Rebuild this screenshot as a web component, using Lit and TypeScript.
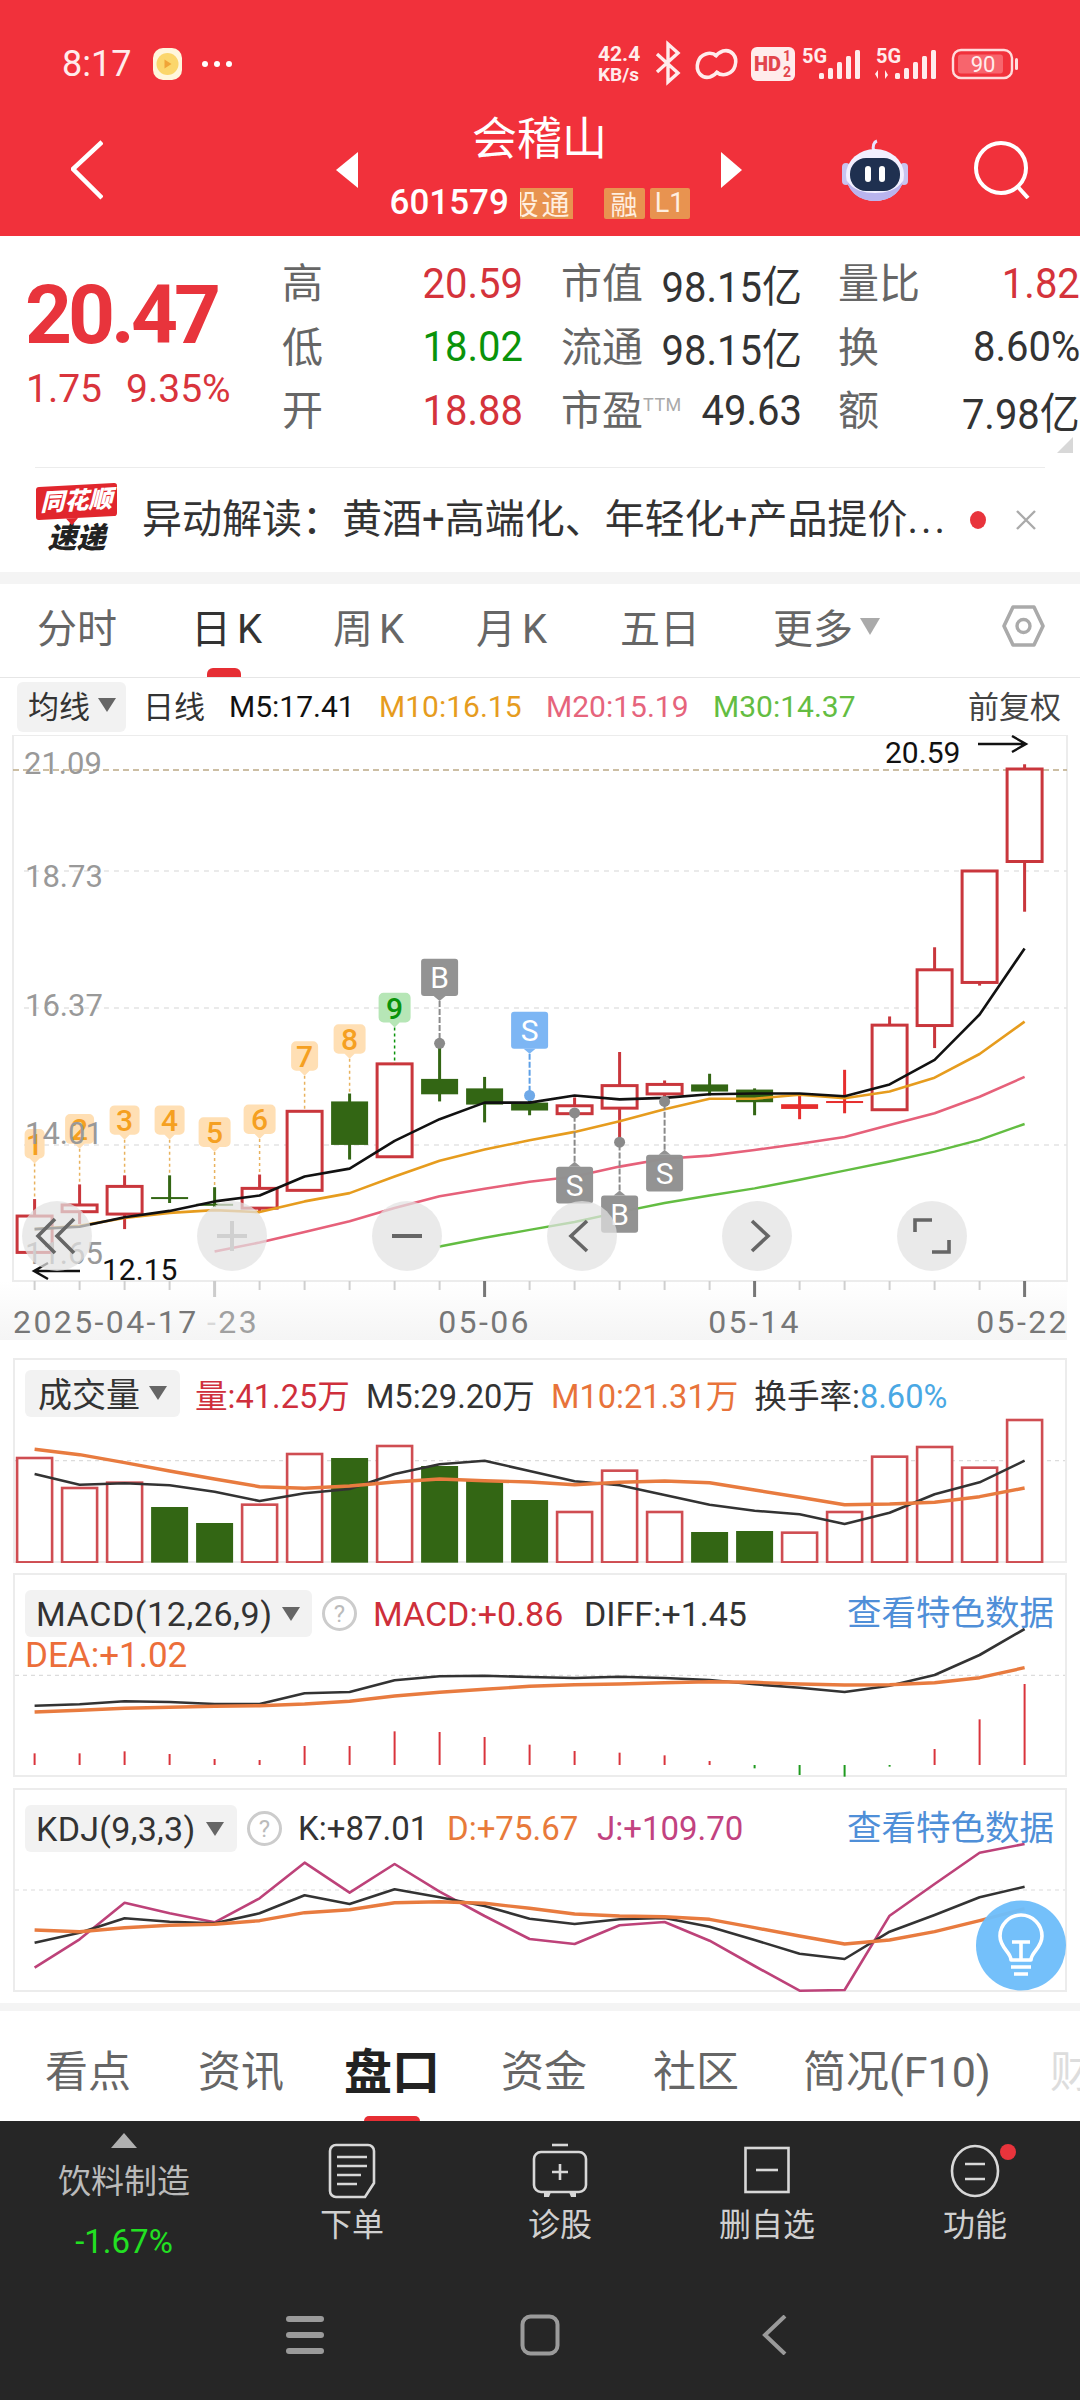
import { LitElement, html, css, svg } from "lit";
import { customElement } from "lit/decorators.js";

/* Horizontal position of the nth trading day on every chart of the page. */
const dayX = (i: number) => 34.6 + 45 * i;
/* Price panel values are stored in panel units; these convert them to page pixels. */
const py = (v: number) => 720 + v / 2.53;
const volY = (v: number) => 1340 + v / 3;
const macdY = (v: number) => 1570 + v / 3;
const kdjY = (v: number) => 1780 + v / 3;

type Candle = [top: number, bottom: number, high: number, low: number, kind: "up" | "down" | "flat"];

const candles: Candle[] = [
  [1255, 1347, 1212, 1347, "up"],
  [1227, 1244, 1175, 1275, "up"],
  [1180, 1250, 1152, 1288, "up"],
  [1207, 1210, 1152, 1222, "down"],
  [1224, 1227, 1182, 1232, "down"],
  [1185, 1235, 1150, 1245, "up"],
  [990, 1190, 990, 1190, "up"],
  [965, 1075, 945, 1112, "down"],
  [870, 1105, 870, 1105, "up"],
  [908, 947, 818, 965, "down"],
  [932, 973, 903, 1018, "down"],
  [968, 988, 950, 1000, "down"],
  [976, 996, 955, 1000, "up"],
  [925, 982, 840, 1068, "up"],
  [922, 946, 912, 965, "up"],
  [922, 940, 895, 950, "down"],
  [935, 967, 932, 1000, "down"],
  [972, 984, 950, 1010, "flat"],
  [964, 967, 885, 995, "flat"],
  [772, 986, 750, 986, "up"],
  [632, 773, 575, 830, "up"],
  [382, 664, 382, 672, "up"],
  [124, 358, 112, 485, "up"],
];

const ma5 = [1288, 1282, 1258, 1242, 1218, 1203, 1155, 1135, 1065, 1010, 968, 968, 950, 960, 956, 947, 945, 945, 952, 922, 860, 745, 578];
const ma10 = [1288, 1280, 1260, 1247, 1240, 1245, 1218, 1197, 1155, 1115, 1087, 1063, 1042, 1015, 985, 958, 958, 948, 957, 940, 905, 845, 763];
const ma20: [number, number][] = [[4, 1345], [5, 1322], [6, 1295], [7, 1268], [8, 1235], [9, 1205], [10, 1186], [11, 1168], [12, 1155], [13, 1130], [14, 1110], [15, 1102], [16, 1088], [17, 1072], [18, 1055], [19, 1025], [20, 995], [21, 953], [22, 903]];
const ma30: [number, number][] = [[9, 1332], [10, 1310], [11, 1290], [12, 1270], [13, 1245], [14, 1222], [15, 1203], [16, 1185], [17, 1163], [18, 1140], [19, 1117], [20, 1092], [21, 1062], [22, 1022]];

const volumes: [number, "r" | "g"][] = [
  [354, "r"], [444, "r"], [428, "r"], [501, "g"], [549, "g"], [494, "r"], [342, "r"], [354, "g"],
  [318, "r"], [378, "g"], [423, "g"], [480, "g"], [516, "r"], [392, "r"], [516, "r"], [576, "g"],
  [573, "g"], [578, "r"], [516, "r"], [350, "r"], [321, "r"], [383, "r"], [240, "r"],
];
const volA = [402, 434, 430, 436, 455, 483, 460, 447, 402, 373, 362, 393, 424, 436, 465, 494, 512, 523, 552, 518, 463, 427, 362];
const volB = [328, 344, 368, 393, 417, 440, 445, 438, 426, 417, 422, 426, 434, 427, 423, 428, 450, 472, 494, 492, 487, 470, 444];

const diff = [407, 403, 394, 396, 402, 402, 370, 366, 331, 319, 317, 321, 324, 320, 324, 330, 343, 353, 366, 347, 315, 255, 177];
const dea = [426, 421, 415, 412, 409, 407, 402, 394, 378, 367, 358, 349, 344, 342, 338, 335, 337, 342, 345, 344, 338, 323, 293];
const macdBars = [550, 550, 544, 552, 567, 570, 528, 528, 484, 486, 501, 524, 543, 548, 556, 573, 595, 615, 620, 590, 537, 448, 342];

const kLine = [488, 458, 415, 425, 430, 400, 346, 372, 328, 352, 378, 416, 432, 418, 414, 440, 480, 521, 537, 455, 405, 352, 320];
const dLine = [450, 455, 443, 436, 433, 422, 398, 389, 368, 365, 370, 385, 402, 408, 410, 418, 443, 468, 492, 480, 455, 422, 386];
const jLine = [563, 478, 368, 400, 427, 355, 248, 338, 252, 335, 408, 477, 492, 436, 426, 482, 558, 632, 630, 407, 312, 218, 192];

/* Numbered sequence flags above the candles: day, label, top and bottom of the flag, flag width. */
const seqFlags: [number, string, number, number, number, boolean][] = [
  [0, "1", 1035, 1122, 20, false],
  [1, "2", 997, 1085, 29, false],
  [2, "3", 975, 1062, 30, false],
  [3, "4", 975, 1062, 30, false],
  [4, "5", 1005, 1093, 32, false],
  [5, "6", 973, 1060, 32, false],
  [6, "7", 813, 900, 27, false],
  [7, "8", 770, 857, 32, false],
  [8, "9", 690, 778, 32, true],
];

/* Trade markers: day, label, flag top, flag bottom, dot position, blue or grey. */
const markers: [number, string, number, number, number, boolean][] = [
  [9, "B", 604, 698, 818, false],
  [11, "S", 738, 832, 950, true],
  [12, "S", 1130, 1223, 994, false],
  [13, "B", 1203, 1297, 1068, false],
  [14, "S", 1100, 1193, 965, false],
];

const line = (vals: number[], map: (v: number) => number, cls: string) =>
  svg`<polyline class=${cls} points=${vals.map((v, i) => `${dayX(i)},${map(v).toFixed(1)}`).join(" ")}></polyline>`;

const lineFrom = (vals: [number, number][], cls: string) =>
  svg`<polyline class=${cls} points=${vals.map(([i, v]) => `${dayX(i)},${py(v).toFixed(1)}`).join(" ")}></polyline>`;

@customElement("app-root")
export class AppRoot extends LitElement {
  static styles = css`
    :host {
      display: block;
      width: 1080px;
      height: 2400px;
      overflow: hidden;
      background: #fff;
      font-family: Roboto, "Noto Sans CJK SC", sans-serif;
      color: #333;
    }
    .app { position: relative; width: 1080px; height: 2400px; overflow: hidden; }
    svg { display: block; }
    text { font-family: Roboto, "Noto Sans CJK SC", sans-serif; }

    /* top red area */
    .hdr { height: 236px; background: #f1313b; color: #fff; }
    .status { display: flex; align-items: center; height: 48px; padding: 40px 0 0 62px; }
    .clock { font-size: 36px; line-height: 48px; width: 67px; color: #ffecec; white-space: nowrap; }
    .mini { margin-left: 24px; }
    .dots { margin-left: 19px; }
    .sys { margin-left: auto; margin-right: 50px; }
    .nav { display: flex; align-items: center; height: 116px; margin-top: 24px; padding-left: 71px; }
    .centre { width: 363px; align-self: flex-start; text-align: center; }
    .tri-l { margin-left: 233px; }
    .tri-r { margin-right: 100px; }
    .search { margin-left: 66px; }
    .name { font-size: 45px; line-height: 56px; color: #fff; }
    .code-row { display: flex; justify-content: center; align-items: center; margin-top: 18px; height: 34px; }
    .code { font-size: 35px; font-weight: 500; line-height: 34px; color: #fff; width: 117px; white-space: nowrap; }
    .tag { display: flex; justify-content: flex-end; align-items: center; height: 31px; background: #e89350; color: #ffefe0; font-size: 28px; border-radius: 2px; overflow: hidden; white-space: nowrap; }
    .tag.cut { width: 53px; margin-left: 13px; margin-right: 31px; letter-spacing: 3px; border-radius: 0; }
    .tag.rong { width: 41px; justify-content: center; margin-right: 5px; font-size: 27px; }
    .tag.lvl { width: 40px; justify-content: center; font-size: 27px; }

    /* quote summary */
    .quote { display: flex; height: 231px; }
    .now { width: 282px; padding: 38px 0 0 25px; box-sizing: border-box; color: #e8343c; }
    .big { font-size: 82px; line-height: 82px; font-weight: 700; letter-spacing: -4px; white-space: nowrap; }
    .chg { display: flex; gap: 24px; margin: 11px 0 0 1px; font-size: 39px; line-height: 44px; color: #d9343c; white-space: nowrap; }
    .stats { display: grid; grid-template-columns: 241px 279px 278px; grid-auto-rows: 63.5px; padding-top: 15px; }
    .cell { display: flex; justify-content: space-between; align-items: center; color: #333; white-space: nowrap; }
    .cell.pl40 { padding-left: 38px; }
    .cell.pl38 { padding-left: 36px; }
    .val { display: inline-block; font-size: 43px; transform: scaleX(0.93); transform-origin: right center; }
    .lbl { font-size: 41px; color: #666; margin-bottom: 5px; }
    .ttm { font-size: 18px; color: #aaa; vertical-align: 14px; letter-spacing: 0.5px; }
    .red { color: #d4333b; }
    .grn { color: #0a930a; }
    .flip { position: absolute; left: 1057px; top: 437px; }

    /* news strip */
    .rule { height: 1px; margin: 0 35px; background: #ececec; }
    .news { display: flex; align-items: center; height: 104px; padding-left: 36px; }
    .logo { width: 81px; flex: none; text-align: center; }
    .logo-top { position: relative; height: 33px; line-height: 33px; background: #e1262d; color: #fff; font-size: 24px; font-weight: 900; font-style: italic; border-radius: 3px; transform: skewY(-3deg); white-space: nowrap; }
    .logo-top::after { content: ""; position: absolute; left: 30px; top: 33px; border-left: 6px solid transparent; border-right: 6px solid transparent; border-top: 7px solid #e1262d; }
    .logo-bot { font-size: 29px; line-height: 33px; margin-top: 4px; font-weight: 900; font-style: italic; color: #222; white-space: nowrap; }
    .headline { width: 805px; margin-left: 25px; font-size: 40px; line-height: 50px; color: #333; white-space: nowrap; overflow: hidden; }
    .ell { letter-spacing: 3px; }
    .pulse { width: 16px; height: 18px; margin-left: 23px; flex: none; border-radius: 50%; background: #e8343c; }
    .close { margin-left: 29px; }
    .band { height: 12px; background: #f4f4f4; }

    /* period tabs */
    .periods { display: grid; grid-template-columns: 154px 142px 143px 144px 153px 229px 43px; align-items: center; height: 84px; padding-left: 37px; font-size: 40px; color: #666; }
    .periods > div { white-space: nowrap; }
    .periods .on { color: #333; }
    .k { margin-left: 6px; }
    .more { display: flex; align-items: center; gap: 7px; }
    .ptr-row { height: 9px; border-bottom: 1px solid #e6e6e6; padding-left: 207px; }
    .ptr { width: 34px; height: 9px; background: #e62e34; border-radius: 6px 6px 0 0; }
    .carets { flex: none; width: 0; height: 0; border-left: 9px solid transparent; border-right: 9px solid transparent; border-top: 14px solid #666; }
    .carets.pale { border-top-color: #aaa; border-left-width: 10px; border-right-width: 10px; border-top-width: 17px; }

    .ma { display: flex; align-items: center; height: 57px; padding-left: 17px; font-size: 30px; white-space: nowrap; }
    .chip { display: flex; align-items: center; box-sizing: border-box; background: #f2f2f2; border-radius: 6px; }
    .chip .carets { margin-left: auto; }
    .ma .chip { width: 109px; height: 50px; padding: 0 10px 4px 11px; font-size: 31px; color: #333; }
    .ma .d { margin: 0 0 4px 17px; color: #333; width: 62px; font-size: 31px; }
    .ma .m5 { margin-left: 24px; width: 124px; color: #111; }
    .ma .m10 { margin-left: 26px; width: 142px; color: #e69c1e; }
    .ma .m20 { margin-left: 25px; width: 143px; color: #e6647c; }
    .ma .m30 { margin-left: 24px; width: 142px; color: #63bd42; }
    .ma .fq { margin: 0 0 4px auto; padding-right: 19px; font-size: 31px; color: #444; }

    /* price chart */
    .price { position: relative; width: 1080px; height: 623px; }
    .pads { position: absolute; left: 22px; top: 466px; display: flex; gap: 105px; }
    .pad { width: 70px; height: 70px; border-radius: 50%; background: rgba(226, 226, 226, 0.72); }
    .pad svg { width: 70px; height: 70px; }

    .frame { fill: none; stroke: #ececec; stroke-width: 2; }
    .grid { stroke: #e4e4e4; stroke-width: 1.4; stroke-dasharray: 5 5; }
    .top-limit { stroke: #bca985; stroke-width: 1.6; stroke-dasharray: 6 4; }
    .tick { stroke: #cfcfcf; stroke-width: 2; }
    .tick.major { stroke: #777; stroke-width: 3; }
    .tick.major.dim { stroke: #ccc; }
    .axis { font-size: 31px; fill: #999; }
    .date { font-size: 32px; fill: #777; letter-spacing: 2.4px; }
    .date-dim { fill: #a0a0a0; }
    .extreme { font-size: 30px; fill: #111; }
    .arrow { fill: none; stroke: #111; stroke-width: 2.4; }

    .up { fill: #fff; stroke: #c9363c; stroke-width: 3; }
    .up-wick { stroke: #c9363c; stroke-width: 3; }
    .down { fill: #336614; }
    .down-wick { stroke: #336614; stroke-width: 3; }
    .flat { fill: #e62e2e; }
    .flat-wick { stroke: #e62e2e; stroke-width: 3; }

    .l { fill: none; stroke-linejoin: round; }
    .l-ma5 { stroke: #111; stroke-width: 2.6; }
    .l-ma10 { stroke: #e69c1e; stroke-width: 2.6; }
    .l-ma20 { stroke: #e6617a; stroke-width: 2.6; }
    .l-ma30 { stroke: #63bd42; stroke-width: 2.4; }

    .seq-flag { fill: #ffdfb4; }
    .seq-flag.g { fill: #b6e6b6; }
    .seq-text { font-size: 30px; font-weight: 500; fill: #f5a021; text-anchor: middle; }
    .seq-text.g { fill: #0a930a; }
    .seq-dash { stroke: #e8b25e; stroke-width: 1.5; stroke-dasharray: 3 3; }
    .seq-dash.g { stroke: #0a930a; }
    .mk-flag { fill: #919191; opacity: 0.98; }
    .mk-flag.b { fill: #7ab5f4; }
    .mk-text { font-size: 30px; fill: #fff; text-anchor: middle; }
    .mk-dash { stroke: #8a8a8a; stroke-width: 2; stroke-dasharray: 6 2; }
    .mk-dash.b { stroke: #5c9fe6; }
    .mk-dot { fill: #8a8a8a; }
    .mk-dot.b { fill: #6fa9e8; }

    /* indicator panels */
    .panel { display: grid; width: 1054px; margin-left: 13px; box-shadow: inset 0 0 0 2px #ececec; }
    .panel > * { grid-area: 1 / 1; }
    .panel svg { width: 1054px; }
    .p-vol { height: 205px; margin-top: 0; }
    .p-macd { height: 204px; margin-top: 10px; }
    .p-kdj { height: 204px; margin-top: 11px; }
    .head { z-index: 1; align-self: start; display: flex; align-items: center; padding: 12px 12px 0; font-size: 33px; color: #333; white-space: nowrap; }
    .head .chip { height: 47px; font-size: 34px; color: #333; }
    .p-vol .head { font-size: 32.6px; gap: 16px; }
    .p-vol .chip { width: 155px; padding: 0 13px 2px 13px; margin-right: -1px; }
    .p-macd .chip { width: 287px; padding: 0 12px 0 11px; letter-spacing: 0.6px; }
    .p-kdj .chip { width: 212px; padding: 0 13px 0 11px; letter-spacing: 0.3px; }
    .ask { display: flex; justify-content: center; align-items: center; box-sizing: border-box; width: 35px; height: 35px; margin-left: 10px; border: 3px solid #ccc; border-radius: 50%; font-size: 24px; color: #bbb; }
    .p-macd .v1 { margin-left: 16px; width: 193px; color: #ce2f3a; font-size: 34px; }
    .p-macd .v2 { margin-left: 18px; color: #333; font-size: 34px; }
    .p-kdj .v1 { margin-left: 16px; width: 130px; }
    .p-kdj .v2 { margin-left: 19px; width: 131px; color: #e87a3a; }
    .p-kdj .v3 { margin-left: 19px; color: #c24280; }
    .link { margin: 0 0 7px auto; padding-right: 1px; font-size: 34.5px; color: #4f8fd8; }
    .dea { font-size: 35px; line-height: 36px; color: #ec6e3a; margin-top: -4px; padding-left: 12px; }
    .head-wrap { z-index: 1; align-self: start; }
    .v-red { color: #cf2f3c; }
    .v-dark { color: #333; }
    .v-or { color: #e8733a; }
    .v-blue { color: #4aa8e4; }
    .vp { fill: #fff; stroke: #cf4d52; stroke-width: 2.6; }
    .vg { fill: #336614; }
    .b-a { stroke: #333; stroke-width: 2.6; }
    .b-b { stroke: #e87b3f; stroke-width: 3.4; }
    .b-j { stroke: #bd4279; stroke-width: 2.6; }
    .hist-r { stroke: #d9343c; stroke-width: 2; }
    .hist-g { stroke: #1f9a1f; stroke-width: 2; }
    .sub-grid { stroke: #dcdcdc; stroke-width: 1.2; stroke-dasharray: 4 4; }

    .bulb { position: absolute; left: 976px; top: 1900px; }
    .band2 { height: 8px; margin-top: 11px; background: #f4f4f4; }

    /* detail tabs */
    .details { display: grid; grid-template-columns: 153px 146px 157px 152px 150px 247px 60px; align-items: center; height: 96px; padding: 9px 0 0 45px; font-size: 43px; color: #666; white-space: nowrap; }
    .details .on { font-size: 48px; font-weight: 700; color: #222; }
    .details .off { color: #ddd; }
    .d-ptr-row { height: 5px; padding-left: 364px; }
    .d-ptr { width: 56px; height: 5px; background: #e62e34; border-radius: 5px 5px 0 0; }

    /* dark footer */
    .foot { height: 279px; background: #262626; color: #d8d8d8; }
    .actions { display: grid; grid-template-columns: 248px 208px 208px 206px 210px; height: 190px; }
    .sector { display: flex; flex-direction: column; align-items: center; padding-top: 12px; }
    .up-tri { width: 0; height: 0; border-left: 13px solid transparent; border-right: 13px solid transparent; border-bottom: 15px solid #b0b0b0; }
    .sector .nm { margin-top: 12px; font-size: 33px; line-height: 44px; color: #bbb; white-space: nowrap; }
    .sector .pc { margin-top: 16px; font-size: 33px; line-height: 44px; color: #22e022; }
    .act { display: flex; flex-direction: column; align-items: center; padding-top: 22px; }
    .act svg { height: 56px; }
    .act .t { margin-top: 6px; font-size: 32px; line-height: 40px; color: #d0d0d0; white-space: nowrap; }
    .sysnav { display: flex; align-items: center; margin-top: 3px; padding-left: 286px; }
    .sysnav .b { margin-left: 196px; }
    .sysnav .c { margin-left: 202px; }
  `;

  private priceChart() {
    const tickRow = candles.map((_, i) => {
      const major = i === 4 || i === 10 || i === 16 || i === 22;
      return svg`<line class="tick ${major ? "major" : ""} ${i === 4 ? "dim" : ""}" x1=${dayX(i)} x2=${dayX(i)} y1="1281" y2=${major ? 1297 : 1290}></line>`;
    });

    const bodies = candles.map(([t, b, h, l, k], i) => {
      const x = dayX(i);
      const wick = k === "up" ? "up-wick" : k === "down" ? "down-wick" : "flat-wick";
      const wicks = svg`<line class=${wick} x1=${x} x2=${x} y1=${py(h)} y2=${py(l)}></line>`;
      if (k === "up")
        return svg`${wicks}<rect class="up" x=${x - 17.5} y=${py(t)} width="35" height=${(b - t) / 2.53}></rect>`;
      return svg`${wicks}<rect class=${k} x=${x - 18.5} y=${py(t)} width="37" height=${Math.max((b - t) / 2.53, 2)}></rect>`;
    });

    const seq = seqFlags.map(([i, label, top, bot, w, g]) => {
      const x = dayX(i);
      const t = py(top);
      const b = py(bot) - 5;
      const hw = w / 2;
      const cls = g ? "g" : "";
      const target = py(candles[i][2]);
      return svg`
        <line class="seq-dash ${cls}" x1=${x} x2=${x} y1=${b + 5} y2=${target}></line>
        <path class="seq-flag ${cls}"
          d="M${x - hw + 5} ${t}H${x + hw - 5}a5 5 0 0 1 5 5V${b - 5}a5 5 0 0 1-5 5H${x + 5}L${x} ${b + 5}L${x - 5} ${b}H${x - hw + 5}a5 5 0 0 1-5-5V${t + 5}a5 5 0 0 1 5-5z"></path>
        <text class="seq-text ${cls}" x=${x} y=${(t + b) / 2 + 11}>${label}</text>`;
    });

    const marks = markers.map(([i, label, top, bot, dot, blue]) => {
      const x = dayX(i);
      const t = py(top);
      const b = py(bot);
      const above = dot > bot;
      const cls = blue ? "b" : "";
      const tip = above ? b + 5 : t - 5;
      const arrow = above
        ? `M${x - 6} ${b}L${x} ${b + 5}L${x + 6} ${b}z`
        : `M${x - 6} ${t}L${x} ${t - 5}L${x + 6} ${t}z`;
      return svg`
        <line class="mk-dash ${cls}" x1=${x} x2=${x} y1=${tip} y2=${py(dot)}></line>
        <circle class="mk-dot ${cls}" cx=${x} cy=${py(dot)} r="5.5"></circle>
        <rect class="mk-flag ${cls}" x=${x - 18.5} y=${t} width="37" height=${b - t} rx="3"></rect>
        <path class="mk-flag ${cls}" d=${arrow}></path>
        <text class="mk-text" x=${x} y=${(t + b) / 2 + 11}>${label}</text>`;
    });

    return html`
      <svg width="1080" height="605" viewBox="0 735 1080 605">
        <defs>
          <linearGradient id="axis-fade" x1="0" y1="0" x2="0" y2="1">
            <stop offset="0" stop-color="#ffffff"></stop>
            <stop offset="1" stop-color="#f5f5f5"></stop>
          </linearGradient>
        </defs>
        <rect x="0" y="1281" width="1067" height="59" fill="url(#axis-fade)"></rect>
        <rect class="frame" x="13" y="735" width="1054" height="546"></rect>
        <line class="top-limit" x1="13" x2="1067" y1="770" y2="770"></line>
        <line class="grid" x1="24" x2="1067" y1="871" y2="871"></line>
        <line class="grid" x1="24" x2="1067" y1="1008" y2="1008"></line>
        <line class="grid" x1="24" x2="1067" y1="1145" y2="1145"></line>

        ${bodies}
        ${line(ma10, py, "l l-ma10")}
        ${lineFrom(ma20, "l l-ma20")}
        ${lineFrom(ma30, "l l-ma30")}
        ${line(ma5, py, "l l-ma5")}
        ${seq}

        <text class="axis" x="24" y="774">21.09</text>
        <text class="axis" x="25" y="887">18.73</text>
        <text class="axis" x="25" y="1016">16.37</text>
        <text class="axis" x="25" y="1144">14.01</text>
        <text class="axis" x="25" y="1264">11.65</text>

        ${marks}

        <text class="extreme" x="885" y="763">20.59</text>
        <path class="arrow" d="M978 744H1026M1012 736L1026 744L1012 752"></path>
        <text class="extreme" x="102" y="1280">12.15</text>
        <path class="arrow" d="M80 1271H34M48 1263L34 1271L48 1279"></path>

        ${tickRow}
        <text class="date" x="13" y="1333">2025-04-17</text>
        <text class="date date-dim" x="207" y="1333"><tspan fill="#d8d8d8">-</tspan>23</text>
        <text class="date" x="484.6" y="1333" text-anchor="middle">05-06</text>
        <text class="date" x="754.6" y="1333" text-anchor="middle">05-14</text>
        <text class="date" x="1069" y="1333" text-anchor="end">05-22</text>
      </svg>`;
  }

  private volumePlot() {
    return html`<svg height="205" viewBox="13 1358 1054 205">
      <line class="sub-grid" x1="15" x2="1065" y1="1460.7" y2="1460.7"></line>
      ${volumes.map(([top, k], i) =>
        k === "r"
          ? svg`<rect class="vp" x=${dayX(i) - 17.5} y=${volY(top)} width="35" height=${volY(667) - volY(top)}></rect>`
          : svg`<rect class="vg" x=${dayX(i) - 18.5} y=${volY(top)} width="37" height=${volY(668) - volY(top)}></rect>`,
      )}
      ${line(volA, volY, "l b-a")}
      ${line(volB, volY, "l b-b")}
    </svg>`;
  }

  private macdPlot() {
    return html`<svg height="204" viewBox="13 1573 1054 204">
      <line class="sub-grid" x1="15" x2="1065" y1="1675.3" y2="1675.3"></line>
      ${macdBars.map((v, i) => {
        const green = v > 585;
        return svg`<line class=${green ? "hist-g" : "hist-r"} x1=${dayX(i)} x2=${dayX(i)} y1=${macdY(v)} y2=${macdY(585)}></line>`;
      })}
      ${line(diff, macdY, "l b-a")}
      ${line(dea, macdY, "l b-b")}
    </svg>`;
  }

  private kdjPlot() {
    return html`<svg height="204" viewBox="13 1788 1054 204">
      <line class="sub-grid" x1="15" x2="1065" y1="1890" y2="1890"></line>
      ${line(jLine, kdjY, "l b-j")}
      ${line(kLine, kdjY, "l b-a")}
      ${line(dLine, kdjY, "l b-b")}
    </svg>`;
  }

  render() {
    return html`<div class="app">
      <header class="hdr">
        <div class="status">
          <div class="clock">8:17</div>
          <svg class="mini" width="29" height="32" viewBox="0 0 29 32">
            <rect width="29" height="32" rx="10" fill="#fff6dc"></rect>
            <circle cx="14.5" cy="16" r="11" fill="#fbd66b"></circle>
            <path d="M11.5 11.5l7 4.5-7 4.5z" fill="#f0a437"></path>
          </svg>
          <svg class="dots" width="32" height="8" viewBox="0 0 32 8">
            <circle cx="4" cy="4" r="3" fill="#fff"></circle>
            <circle cx="16" cy="4" r="3" fill="#fff"></circle>
            <circle cx="28" cy="4" r="3" fill="#fff"></circle>
          </svg>
          <svg class="sys" width="432" height="48" viewBox="598 40 432 48" fill="#fff">
            <text x="598" y="61" font-size="21" font-weight="700" fill="#ffecec">42.4</text>
            <text x="598" y="81" font-size="19" font-weight="700" fill="#ffecec">KB/s</text>
            <path d="M657 54l21 19-10 9V44l10 9-21 19" fill="none" stroke="#ffecec" stroke-width="3.4"></path>
            <g fill="none" stroke="#ffecec" stroke-width="3.6">
              <path d="M717 56a12 12 0 0 0-19 6c-3 10 4 17 12 15 3-1 6-3 8-6"></path>
              <path d="M716 72a12 12 0 0 0 19-6c3-10-4-17-12-15-3 1-6 3-8 6"></path>
            </g>
            <rect x="751" y="47" width="44" height="34" rx="6" fill="#ffecec"></rect>
            <text x="754" y="71" font-size="20" font-weight="900" fill="#e2454c">HD</text>
            <text x="783" y="61" font-size="14" font-weight="700" fill="#e2454c">1</text>
            <text x="783" y="77" font-size="14" font-weight="700" fill="#e2454c">2</text>
            <text x="802" y="63" font-size="20" font-weight="700" fill="#ffecec">5G</text>
            <g fill="#ffecec">
              <rect x="819" y="73" width="5" height="6" rx="1.5"></rect>
              <rect x="828" y="68" width="5" height="11" rx="1.5"></rect>
              <rect x="837" y="62" width="5" height="17" rx="1.5"></rect>
              <rect x="846" y="56" width="5" height="23" rx="1.5"></rect>
              <rect x="855" y="50" width="5" height="29" rx="1.5"></rect>
            </g>
            <text x="876" y="63" font-size="20" font-weight="700" fill="#ffecec">5G</text>
            <path d="M878 79v-9l-3 4zM885 70v9l3-4z" fill="#ffecec"></path>
            <g fill="#ffecec">
              <rect x="895" y="73" width="5" height="6" rx="1.5"></rect>
              <rect x="904" y="68" width="5" height="11" rx="1.5"></rect>
              <rect x="913" y="62" width="5" height="17" rx="1.5"></rect>
              <rect x="922" y="56" width="5" height="23" rx="1.5"></rect>
              <rect x="931" y="50" width="5" height="29" rx="1.5"></rect>
            </g>
            <rect x="953" y="50" width="59" height="28" rx="8" fill="none" stroke="#ffdcdc" stroke-width="2.4"></rect>
            <rect x="958" y="54.5" width="45" height="19" rx="3" fill="#f7656d"></rect>
            <rect x="1015" y="58" width="3" height="12" rx="1.5" fill="#ffdcdc"></rect>
            <text x="983" y="72" font-size="22" text-anchor="middle" fill="#ffecec">90</text>
          </svg>
        </div>
        <div class="nav">
          <svg width="32" height="60" viewBox="0 0 32 60">
            <path d="M31 2L2 29l29 29" fill="none" stroke="#fff" stroke-width="4.5"></path>
          </svg>
          <svg class="tri-l" width="22" height="36" viewBox="0 0 22 36"><path d="M22 0v36L0 18z" fill="#fff"></path></svg>
          <div class="centre">
            <div class="name">会稽山</div>
            <div class="code-row">
              <span class="code">601579</span>
              <span class="tag cut">沪股通</span>
              <span class="tag rong">融</span>
              <span class="tag lvl">L1</span>
            </div>
          </div>
          <svg class="tri-r" width="21" height="36" viewBox="0 0 21 36"><path d="M0 0v36l21-18z" fill="#fff"></path></svg>
          <svg width="66" height="62" viewBox="0 0 66 62">
            <path d="M32 12c-2-5 0-9 3-10" fill="none" stroke="#e8e4ff" stroke-width="3"></path>
            <rect x="0" y="24" width="8" height="22" rx="4" fill="#c8c4f0"></rect>
            <rect x="58" y="24" width="8" height="22" rx="4" fill="#c8c4f0"></rect>
            <ellipse cx="33" cy="36" rx="29" ry="26" fill="#f2f0ff"></ellipse>
            <path d="M5 42c3 14 16 20 28 20s25-6 28-20c-6 9-17 12-28 12S11 51 5 42z" fill="#b9b4ee"></path>
            <rect x="8" y="19" width="50" height="33" rx="16" fill="#1f3050"></rect>
            <rect x="23" y="27" width="6" height="16" rx="3" fill="#fff"></rect>
            <rect x="37" y="27" width="6" height="16" rx="3" fill="#fff"></rect>
          </svg>
          <svg class="search" width="56" height="58" viewBox="0 0 56 58">
            <circle cx="27" cy="27" r="25" fill="none" stroke="#fff" stroke-width="4"></circle>
            <path d="M44 46l10 11" stroke="#fff" stroke-width="4"></path>
          </svg>
        </div>
      </header>

      <section class="quote">
        <div class="now">
          <div class="big">20.47</div>
          <div class="chg"><span>1.75</span><span>9.35%</span></div>
        </div>
        <div class="stats">
          <div class="cell"><span class="lbl">高</span><span class="val red">20.59</span></div>
          <div class="cell pl40"><span class="lbl">市值</span><span class="val">98.15亿</span></div>
          <div class="cell pl38"><span class="lbl">量比</span><span class="val red">1.82</span></div>
          <div class="cell"><span class="lbl">低</span><span class="val grn">18.02</span></div>
          <div class="cell pl40"><span class="lbl">流通</span><span class="val">98.15亿</span></div>
          <div class="cell pl38"><span class="lbl">换</span><span class="val">8.60%</span></div>
          <div class="cell"><span class="lbl">开</span><span class="val red">18.88</span></div>
          <div class="cell pl40"><span class="lbl">市盈<span class="ttm">TTM</span></span><span class="val">49.63</span></div>
          <div class="cell pl38"><span class="lbl">额</span><span class="val">7.98亿</span></div>
        </div>
      </section>
      <svg class="flip" width="16" height="16" viewBox="0 0 16 16"><path d="M16 0v16H0z" fill="#d8d8d8"></path></svg>

      <div class="rule"></div>
      <div class="news">
        <div class="logo">
          <div class="logo-top">同花顺</div>
          <div class="logo-bot">速递</div>
        </div>
        <div class="headline">异动解读：黄酒+高端化、年轻化+产品提价<span class="ell">...</span></div>
        <div class="pulse"></div>
        <svg class="close" width="22" height="22" viewBox="0 0 22 22">
          <path d="M2 2l18 18M20 2L2 20" stroke="#aaa" stroke-width="2.4"></path>
        </svg>
      </div>
      <div class="band"></div>

      <nav class="periods">
        <div>分时</div>
        <div class="on">日<span class="k">K</span></div>
        <div>周<span class="k">K</span></div>
        <div>月<span class="k">K</span></div>
        <div>五日</div>
        <div class="more">更多<span class="carets pale"></span></div>
        <svg width="43" height="42" viewBox="0 0 43 42">
          <path d="M11 2h21l9 19-9 19H11L2 21z" fill="none" stroke="#aaa" stroke-width="3.6" stroke-linejoin="round"></path>
          <circle cx="21.5" cy="21" r="6.5" fill="none" stroke="#aaa" stroke-width="3.4"></circle>
        </svg>
      </nav>
      <div class="ptr-row"><div class="ptr"></div></div>

      <div class="ma">
        <div class="chip">均线<span class="carets"></span></div>
        <span class="d">日线</span>
        <span class="m5">M5:17.41</span>
        <span class="m10">M10:16.15</span>
        <span class="m20">M20:15.19</span>
        <span class="m30">M30:14.37</span>
        <span class="fq">前复权</span>
      </div>

      <div class="price">
        ${this.priceChart()}
        <div class="pads">
          <div class="pad"><svg viewBox="0 0 70 70"><path d="M33 18L16 35l17 17M52 18L35 35l17 17" fill="none" stroke="#666" stroke-width="3.6"></path></svg></div>
          <div class="pad"><svg viewBox="0 0 70 70"><path d="M35 20v30M20 35h30" stroke="#d0d0d0" stroke-width="4"></path></svg></div>
          <div class="pad"><svg viewBox="0 0 70 70"><path d="M20 35h30" stroke="#666" stroke-width="4"></path></svg></div>
          <div class="pad"><svg viewBox="0 0 70 70"><path d="M40 20L24 35l16 15" fill="none" stroke="#666" stroke-width="3.6"></path></svg></div>
          <div class="pad"><svg viewBox="0 0 70 70"><path d="M30 20l16 15-16 15" fill="none" stroke="#666" stroke-width="3.6"></path></svg></div>
          <div class="pad"><svg viewBox="0 0 70 70"><path d="M35 19H18v12M35 51h17V39" fill="none" stroke="#666" stroke-width="3.6"></path></svg></div>
        </div>
      </div>

      <section class="panel p-vol">
        ${this.volumePlot()}
        <div class="head">
          <div class="chip">成交量<span class="carets"></span></div>
          <span class="v-red">量:41.25万</span>
          <span class="v-dark">M5:29.20万</span>
          <span class="v-or">M10:21.31万</span>
          <span class="v-dark">换手率:<span class="v-blue">8.60%</span></span>
        </div>
      </section>

      <section class="panel p-macd">
        ${this.macdPlot()}
        <div class="head-wrap">
          <div class="head">
            <div class="chip">MACD(12,26,9)<span class="carets"></span></div>
            <span class="ask">?</span>
            <span class="v1">MACD:+0.86</span>
            <span class="v2">DIFF:+1.45</span>
            <span class="link">查看特色数据</span>
          </div>
          <div class="dea">DEA:+1.02</div>
        </div>
      </section>

      <section class="panel p-kdj">
        ${this.kdjPlot()}
        <div class="head">
          <div class="chip">KDJ(9,3,3)<span class="carets"></span></div>
          <span class="ask">?</span>
          <span class="v1">K:+87.01</span>
          <span class="v2">D:+75.67</span>
          <span class="v3">J:+109.70</span>
          <span class="link">查看特色数据</span>
        </div>
      </section>
      <div class="band2"></div>

      <svg class="bulb" width="90" height="91" viewBox="0 0 90 91">
        <circle cx="45" cy="45.5" r="45" fill="#6ebdfa" opacity="0.96"></circle>
        <path d="M35 60c0-8-11-12-11-24a21 21 0 0 1 42 0c0 12-11 16-11 24z" fill="none" stroke="#fff" stroke-width="3.6" stroke-linejoin="round"></path>
        <path d="M36 42h18M45 42v18M35 67h20M38 74h14" stroke="#fff" stroke-width="3.6" fill="none"></path>
      </svg>

      <nav class="details">
        <div>看点</div>
        <div>资讯</div>
        <div class="on">盘口</div>
        <div>资金</div>
        <div>社区</div>
        <div>简况(F10)</div>
        <div class="off">财</div>
      </nav>
      <div class="d-ptr-row"><div class="d-ptr"></div></div>

      <footer class="foot">
        <div class="actions">
          <div class="sector">
            <div class="up-tri"></div>
            <div class="nm">饮料制造</div>
            <div class="pc">-1.67%</div>
          </div>
          <div class="act">
            <svg width="48" height="56" viewBox="0 0 48 56" fill="none" stroke="#d8d8d8" stroke-width="2.6">
              <path d="M8 2h32a6 6 0 0 1 6 6v32l-9 14H8a6 6 0 0 1-6-6V8a6 6 0 0 1 6-6z"></path>
              <path d="M9 14h30M9 23h30M9 32h24M9 41h20"></path>
            </svg>
            <div class="t">下单</div>
          </div>
          <div class="act">
            <svg width="56" height="56" viewBox="0 0 56 56" fill="none" stroke="#d8d8d8" stroke-width="2.6">
              <path d="M20 2h16"></path>
              <rect x="2" y="9" width="52" height="40" rx="7"></rect>
              <path d="M28 21v16M20 29h16"></path>
              <path d="M12 49v5h5l2-5M44 49v5h-5l-2-5" fill="#d8d8d8" stroke="none"></path>
            </svg>
            <div class="t">诊股</div>
          </div>
          <div class="act">
            <svg width="46" height="56" viewBox="0 0 46 56" fill="none" stroke="#d8d8d8" stroke-width="2.6">
              <rect x="1.5" y="5" width="43" height="44"></rect>
              <path d="M12 27h22"></path>
            </svg>
            <div class="t">删自选</div>
          </div>
          <div class="act">
            <svg width="82" height="56" viewBox="0 0 82 56" fill="none" stroke="#d8d8d8" stroke-width="2.6">
              <ellipse cx="41" cy="28" rx="23" ry="25"></ellipse>
              <path d="M31 21h20M31 36h20"></path>
              <circle cx="81" cy="9" r="8" fill="#e8343c" stroke="none" transform="translate(-7 0)"></circle>
            </svg>
            <div class="t">功能</div>
          </div>
        </div>
        <div class="sysnav">
          <svg width="38" height="38" viewBox="0 0 38 38" fill="#9a9a9a">
            <rect width="38" height="6" rx="3" y="0"></rect>
            <rect width="38" height="6" rx="3" y="16"></rect>
            <rect width="38" height="6" rx="3" y="32"></rect>
          </svg>
          <svg class="b" width="40" height="42" viewBox="0 0 40 42">
            <rect x="2.5" y="2.5" width="35" height="37" rx="8" fill="none" stroke="#9a9a9a" stroke-width="4"></rect>
          </svg>
          <svg class="c" width="25" height="40" viewBox="0 0 25 40">
            <path d="M23 1L3 20l20 19" fill="none" stroke="#9a9a9a" stroke-width="4"></path>
          </svg>
        </div>
      </footer>
    </div>`;
  }
}
